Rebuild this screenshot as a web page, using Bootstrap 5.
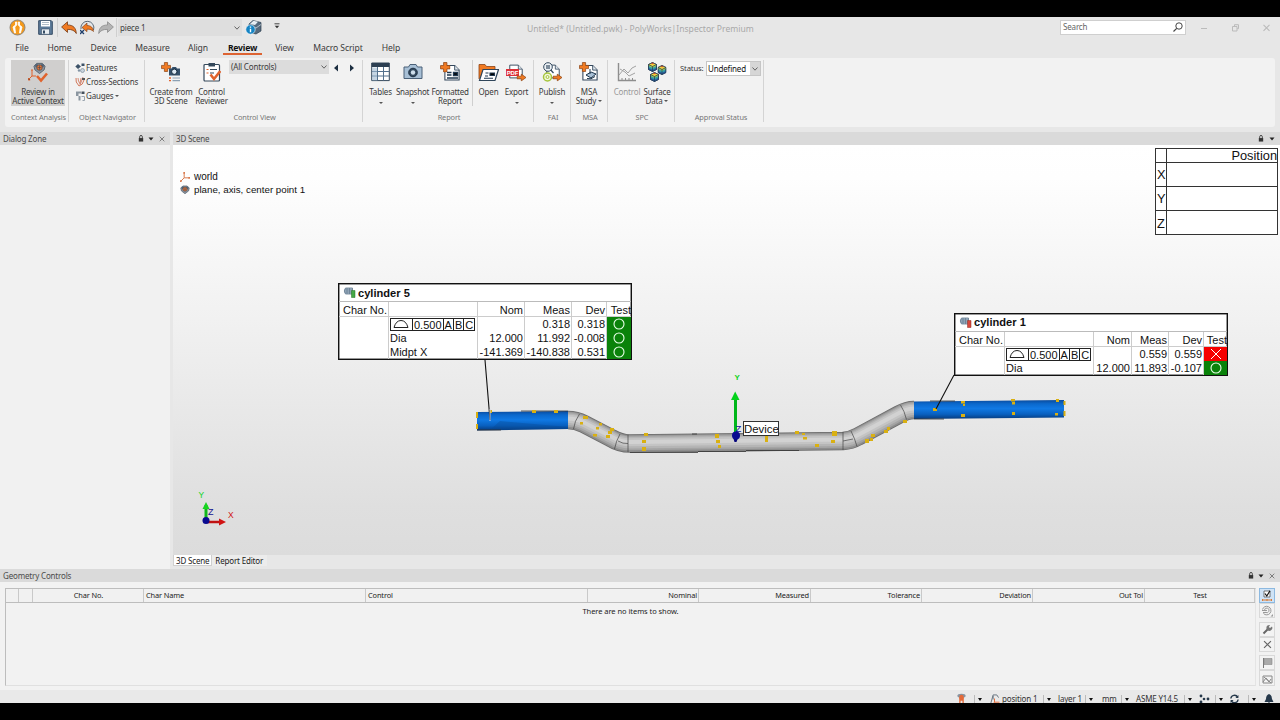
<!DOCTYPE html>
<html lang="en">
<head>
<meta charset="utf-8">
<meta name="viewport" content="width=device-width, initial-scale=1">
<title>Untitled* (Untitled.pwk) - PolyWorks|Inspector Premium</title>
<link href="https://cdn.jsdelivr.net/npm/bootstrap@5.3.0/dist/css/bootstrap.min.css" rel="stylesheet">
<style>
body{background:#000;padding:17px 0;height:720px;overflow:hidden;font:8px/10px "Noto Sans","Open Sans",sans-serif;letter-spacing:-.17px;color:#3b3b3b}
.app{height:686px;background:#e7e7e7}
svg{display:block;flex:none}
.titlebar{height:21px;padding-left:9px}
.vsep{width:1px;background:#cfcfcf}
.piece{width:124px;height:17px;background:#dedede;margin-left:3px;padding:0 2px}
.caption{left:527px;top:6px;font-size:8.57px;letter-spacing:0;color:#a9a9a9;line-height:13px}
.search{left:1060px;top:3px;width:126px;height:15px;background:#fff;border:1px solid #cfcfcf;padding:0 2px 2px;color:#666}
.menu{height:20px;font-size:8.6px;letter-spacing:-.1px}
.menu span{height:17px;padding-top:5px;text-align:center;white-space:nowrap;border-bottom:2px solid transparent}
.menu .on{font-weight:700;color:#111;border-color:#dd6332;letter-spacing:-.2px}
.ribbon{height:69px;margin:0 5px;background:#f2f2f2;border-radius:3px;padding-top:2px}
.grp{height:62px;border-right:1px solid #d4d4d4;position:relative}
.grp .glabel{position:absolute;left:2px;right:0;top:52px;text-align:center;font-size:7.4px;letter-spacing:-.13px;color:#777;line-height:10px;white-space:nowrap}
.rb{display:flex;flex-direction:column;align-items:center;text-align:center;line-height:9px;white-space:nowrap;padding-top:2px}
.rb svg{margin-bottom:5px}
.rb.on{background:#d0cfce}
.car{display:inline-block;width:0;height:0;border:2px solid transparent;border-top:2.5px solid #555;border-bottom:0;vertical-align:2px}
.cb{background:#dcdcdc;height:14px;padding:0 2px}
.row14{height:14px;display:flex;align-items:center;gap:1px;white-space:nowrap;position:relative;top:1px}
.dock{height:13px;background:#dadada;color:#4c4c4c;padding:0 4px 0 3px;line-height:13px}
.scene{height:410px;background:linear-gradient(#fff 0,#fefefe 8%,#f0f0f0 45%,#dfdfdf 88%,#dcdcdc);position:relative;overflow:hidden;font-family:"Liberation Sans",Arial,sans-serif;color:#111;letter-spacing:0}
.tree{left:7px;top:26px;font-size:10px;line-height:12.5px}
.pos{left:982px;top:3px;width:123px;height:87px;border:1px solid #333;background:#fff;font-size:12.8px;display:grid;grid-template:14px repeat(3,24px)/11px 1fr;gap:0}
.pos div{border-bottom:1px solid #333;display:flex;align-items:center;padding-top:1px}
.pos div:nth-child(odd){border-right:1px solid #333;padding-left:1px}
.pos div:nth-last-child(-n+2){border-bottom:0}
.callout{background:#fff;border:1px solid #111;box-shadow:inset 0 0 0 .5px #333;font-size:11px;line-height:14px}
.ctitle{font-weight:700;font-size:11.1px;border-bottom:1px solid #bbb;padding-left:4px;gap:2px;display:flex;align-items:center}
.cgrid{display:grid}
.cgrid>div{text-align:right;white-space:nowrap;border-right:1px solid #ccc;padding-right:1px;overflow:visible}
.cgrid>div.s{text-align:left;padding-left:1px}
.cgrid>div.h{border-bottom:1px solid #ccc;padding-top:1px}
.cgrid>div.t{border-right:0;padding-right:0}
.ok{background:#0a820a;display:flex;align-items:center;justify-content:center}
.ng{background:#f60000;display:flex;align-items:center;justify-content:center}
.fcf{display:inline-flex;border:1px solid #222;height:13px;line-height:12px;margin-top:1px;margin-left:1px}
.fcf b{font-weight:400;border-left:1px solid #222;padding:0 1px}
.devtag{left:570px;top:276px;width:36px;height:15px;background:#fff;border:1px solid #333;font-size:11.4px;line-height:15px;text-align:center}
.views{height:12px}
.views span{padding:0 4px 0 3px;height:11px;line-height:11px;background:#ececec;color:#222}
.views .on{background:#fff;border:1px solid #cfcfcf;border-top:0;padding:0 2px}
.geo{height:108px;background:#f2f2f2;padding:6px 4px 4px 5px}
.gtable{width:1251px;height:98px;border:1px solid #bdbdbd;border-right-color:#e4e4e4;border-bottom-color:#e0e0e0;background:#f2f2f2}
.ghead{height:14px;border-bottom:1px solid #bdbdbd;background:#f1f1f1;font-size:7.4px;letter-spacing:-.12px;line-height:13px;color:#222}
.ghead div{border-right:1px solid #c9c9c9;padding:0 1px 0 2px;white-space:nowrap}
.tb{width:16px;height:16px;border:1px solid #d9d9d9;background:#f3f3f3;display:flex;align-items:center;justify-content:center}
.tb.on{background:#cfe3f6;border-color:#8db9e0}
.status{height:13px;color:#333;background:#e9e9e9;padding-top:4px;overflow:hidden}
.dd{border-left:1px solid #bbb;width:8px;padding-left:3px;height:8px;line-height:6px}
.dd i{display:inline-block;border:2.5px solid transparent;border-top:3px solid #111;border-bottom:0}
</style>
</head>
<body>
<svg width="0" height="0" class="position-absolute">
<defs>
<symbol id="lock" viewBox="0 0 6 8"><path d="M1.5 4V2a1.5 1.5 0 0 1 3 0v2" fill="none" stroke="#333"/><path d="M.5 3.5h5v4h-5z" fill="#333"/></symbol>
<symbol id="dn" viewBox="0 0 6 4"><path d="M.5.5h5L3 3.5z" fill="#222"/></symbol>
<symbol id="ex" viewBox="0 0 6 6"><path d="M.7.7l4.6 4.6M5.3.7.7 5.3" stroke="#666" stroke-width=".8"/></symbol>
<symbol id="chev" viewBox="0 0 6 4"><path d="M.5.5 3 3.2 5.5.5" fill="none" stroke="#555" stroke-width=".9"/></symbol>
<symbol id="plus" viewBox="0 0 10 10"><path d="M3.4.5h3.2v2.9h2.9v3.2H6.6v2.9H3.4V6.6H.5V3.4h2.9z" fill="#f07a22" stroke="#8a4316" stroke-width=".7"/></symbol>
<symbol id="arr" viewBox="0 0 10 8"><path d="M.5 2.7h4.3V.6L9.5 4 4.8 7.4V5.3H.5z" fill="#f07a22" stroke="#8a4316" stroke-width=".7"/></symbol>
<symbol id="axes" viewBox="0 0 12 12"><path d="M5 1v6h6M5 7l-4 4" fill="none" stroke="#d97b4f" stroke-width="1.2"/><path d="M4 0h2v2H4zM10 6h2v2h-2zM0 10h2v2H0z" fill="#d97b4f"/></symbol>
<symbol id="dat" viewBox="0 0 14 12"><path d="M4 1h6l3 3-1 4-5 4-5-4-1-4z" fill="#8794a1" stroke="#444f5a" stroke-width=".8"/><circle cx="4" cy="3.5" r="1.8" fill="#506478"/><circle cx="10" cy="3.5" r="1.8" fill="#506478"/><circle cx="7" cy="5.5" r="3" fill="#e67537" stroke="#5a4a44" stroke-width=".8"/><path d="M7 3v5M4.8 5.5h4.4" stroke="#374655" stroke-width=".6"/></symbol>
<symbol id="cyl" viewBox="0 0 13 11"><path d="M2.5 1h7v6h-7Q0 4 2.5 1z" fill="#a9bccd" stroke="#63798e" stroke-width=".8"/><path d="M1.5 3h8M1.5 5h8M4 1v6M6.5 1v6" stroke="#63798e" stroke-width=".7"/></symbol>
<symbol id="cube" viewBox="0 0 9 10"><path d="M4.5.5 8.5 2.5v5l-4 2-4-2v-5z" fill="#34a0a4" stroke="#223a55" stroke-width=".7"/><path d="M4.5.5l4 2-4 2-4-2z" fill="#f2cf3a"/><path d="M3 1.3 4.5.5 6 1.3 4.5 2.3z" fill="#e04a2e"/><path d="M.5 5.8l4 2 4-2v1.7l-4 2-4-2z" fill="#285a9e"/><path d="M.5 2.5l4 2 4-2v1.2l-4 2-4-2z" fill="#b9d246"/><path d="M4.5 4.5v5M.5 2.5l4 2 4-2M4.5.5 8.5 2.5v5l-4 2-4-2v-5z" fill="none" stroke="#223a55" stroke-width=".7"/></symbol>
<symbol id="page" viewBox="0 0 18 18"><path d="M1 .8h11L17 6v11.2H1z" fill="#fff" stroke="#32475c" stroke-width="1.2"/><path d="M12 .8V6h5" fill="#dfe6ec" stroke="#32475c"/></symbol>
<symbol id="prof" viewBox="0 0 18 10"><path d="M2 8.5h14M2 8.5Q4 1.5 9 1.5t7 7" fill="none" stroke="#222" stroke-width="1"/></symbol>
<symbol id="ring" viewBox="0 0 12 12"><circle cx="6" cy="6" r="5" fill="none" stroke="#e9ffe9" stroke-width="1.1"/></symbol>
</defs>
</svg>

<div class="app">
<header class="titlebar d-flex align-items-center position-relative">
  <svg width="17" height="17" viewBox="0 0 17 17"><circle cx="8.5" cy="8.5" r="7.5" fill="#f49a1c" stroke="#8f8577"/><path d="M6.500 3h1.200v3L5.800 8l.7 6H5.500L4 8l2.500-2zM10.500 3H9.300v3l1.900 2-.7 6h1L13 8l-2.500-2z" fill="#fff" stroke="#fff" stroke-width=".8"/></svg>
  <svg style="margin-left:12px" width="15" height="15" viewBox="0 0 15 15"><path d="M.7.7h12.600l1 1v12.600H.7z" fill="#5d7b99" stroke="#354c64"/><path d="M3 1h9v5.500H3z" fill="#fff"/><path d="M4 2.500h7M4 4.500h7" stroke="#8fa0b0" stroke-width=".7"/><path d="M3.500 9h8v5.300h-8z" fill="#e9eef2" stroke="#354c64" stroke-width=".6"/><path d="M5 10.500h2v3H5z" fill="#354c64"/></svg>
  <div class="vsep ms-1" style="height:19px"></div>
  <svg style="margin-left:3px" width="16" height="14" viewBox="0 0 16 14"><path d="M.6 6 6.500.8V4c6 0 8.500 3 8.800 8.500C13.500 9.500 11 8.300 6.500 8.400v3z" fill="#f07a22" stroke="#743b18" stroke-width=".8"/></svg>
  <svg style="margin-left:3px" width="15" height="15" viewBox="0 0 15 15"><path d="M1 9a6.500 6.500 0 1 1 12.500 1" fill="#e3e6e9" stroke="#5b6b79"/><path d="M2 7.500 7 3v2.500c4 0 6 2 6.500 6C12 10 10 9 7 9.200v2.500z" fill="#f07a22" stroke="#743b18" stroke-width=".6"/><path d="M0 10l4 4M4 10l-4 4" stroke="#1f3f6c" stroke-width="1.300"/></svg>
  <svg style="margin-left:3px" width="16" height="14" viewBox="0 0 16 14"><path d="M15.400 6 9.500.8V4C3.500 4 1 7 .7 12.500 2.500 9.500 5 8.300 9.500 8.400v3z" fill="#b4b4b4" stroke="#8b8b8b" stroke-width=".8"/></svg>
  <div class="vsep" style="height:19px;margin-left:2px"></div>
  <div class="piece d-flex align-items-center justify-content-between" style="margin-left:1px"><span>piece 1</span><svg width="6" height="4"><use href="#chev"/></svg></div>
  <svg style="margin-left:3px" width="17" height="15" viewBox="0 0 17 15"><path d="M4 4l4-3.500 8 2V11l-5 3-7-2z" fill="#566a7d" stroke="#2e4052" stroke-width=".7"/><path d="M4 6l7 2 5-3.500" fill="none" stroke="#c5d0da" stroke-width=".8"/><path d="M5 4 8.500.8l4.500 1L10 5z" fill="#e6edf3"/><circle cx="5.500" cy="9.500" r="4.700" fill="#1584c4" stroke="#fff" stroke-width=".6"/><path d="M5.500 6.500v1.300M5.500 8.700v3.600" stroke="#fff" stroke-width="1.400"/></svg>
  <svg class="position-absolute" style="left:274px;top:6px" width="6" height="6" viewBox="0 0 6 6"><path d="M.5.800h5" stroke="#333" stroke-width=".9"/><path d="M.7 2.700h4.600L3 5.300z" fill="#333"/></svg>
  <span class="caption position-absolute">Untitled* (Untitled.pwk) - PolyWorks|Inspector Premium</span>
  <div class="search position-absolute d-flex align-items-center justify-content-between"><span>Search</span><svg width="10" height="10" viewBox="0 0 10 10"><circle cx="6" cy="4" r="3.200" fill="none" stroke="#444"/><path d="M3.700 6.300.5 9.500" stroke="#444" stroke-width="1.200"/></svg></div>
  <div class="position-absolute d-flex align-items-center" style="left:1201px;top:7px;gap:24px"><svg width="7" height="8" viewBox="0 0 7 8"><path d="M0 4.500h6" stroke="#bbb"/></svg><svg width="7" height="8" viewBox="0 0 7 8"><path d="M.5 2.500h4.500v4.500H.5zM2.500 2V.7H6.500v4H5.200" fill="none" stroke="#bbb"/></svg><svg width="7" height="8" viewBox="0 0 7 8"><path d="M.5.800l6 6M6.500.800l-6 6" stroke="#bbb" stroke-width="1.100"/></svg></div>
</header>
<nav class="menu d-flex">
  <span style="width:44px">File</span><span style="width:31px">Home</span><span style="width:57px">Device</span><span style="width:41px">Measure</span><span style="width:50px">Align</span><span class="on" style="width:39px">Review</span><span style="width:45px">View</span><span style="width:62px">Macro Script</span><span style="width:44px">Help</span>
</nav>
<section class="ribbon d-flex">
  <div class="grp d-flex" style="width:64px;padding-left:6px">
    <div class="rb on" style="width:54px;height:46px"><svg width="20" height="21" viewBox="0 0 20 21"><use href="#dat" x="5" y="0" width="13" height="12"/><path d="M4 8v6h4M4 14l-3.500 3.500" stroke="#e0632d" fill="none"/><path d="M3 8h2M.2 16v2h2" stroke="#e0632d"/><path d="M9 14l4 4.500L19 11.500" stroke="#e0632d" stroke-width="2.600" fill="none"/></svg><span style="margin-top:-1px">Review in<br>Active Context</span></div>
    <div class="glabel" style="left:4px">Context Analysis</div>
  </div>
  <div class="grp" style="width:76px;padding-left:6px">
    <div class="row14"><svg width="10" height="10" viewBox="0 0 10 10"><path d="M3 1l3 2.500L3 6 .3 3.500z" fill="#3c5268"/><path d="M6.500.5h3v2.500h-3z" fill="#3c5268"/><circle cx="7.500" cy="7.500" r="2" fill="#c8d3dc" stroke="#71818f" stroke-width=".6"/><circle cx="4" cy="7.500" r="1.200" fill="#8193a3"/></svg>Features</div>
    <div class="row14"><svg width="10" height="10" viewBox="0 0 10 10"><path d="M1 1q-1 4 3 8 4-1 5-6" fill="none" stroke="#d3785a"/><path d="M3 1q0 3 2 6M6 1l-1 5M8 0l-3 8" fill="none" stroke="#c96e55" stroke-width=".8"/><path d="M7 1h3v2H7z" fill="#555"/></svg>Cross-Sections</div>
    <div class="row14"><svg width="10" height="10" viewBox="0 0 10 10"><path d="M1 .5h5v2H3.500V5H1zM3.500 5h2v4.500h-2z" fill="#8b96a0"/><path d="M6.500.5h3v2.500h-3z" fill="#444f5a"/><path d="M6.500 5.500h3v4h-2" fill="none" stroke="#9aa5af"/></svg>Gauges <i class="car"></i></div>
    <div class="glabel">Object Navigator</div>
  </div>
  <div class="grp d-flex" style="width:218px;padding-left:3px">
    <div class="rb" style="width:46px"><svg width="20" height="20" viewBox="0 0 20 20"><use href="#plus" width="10" height="10"/><path d="M8 6.500h2.500l1-1.500h3.500l1 1.500H19v7H8z" fill="#34506b"/><circle cx="13.300" cy="9.700" r="2.700" fill="#dce8f2" stroke="#10263a"/><path d="M8 16h2M8 18.700h2" stroke="#e0632d" stroke-width="1.300"/><path d="M11.500 16H19M11.500 18.700H19" stroke="#8ba0b3" stroke-width="1.200"/></svg><span>Create from<br>3D Scene</span></div>
    <div class="rb" style="width:35px"><svg width="18" height="20" viewBox="0 0 18 20"><rect x="1" y="2.500" width="15.500" height="16.500" rx="1" fill="#fff" stroke="#34485b" stroke-width="1.200"/><path d="M5.500 1h6.500v3.500H5.500z" fill="#34485b"/><path d="M3.500 7.500h2M3.500 11h2" stroke="#e0632d" stroke-width="1.200"/><path d="M7 7.500h7M7 11h4" stroke="#34485b" stroke-width="1.200"/><path d="M7.500 12.500l3.500 4.500L17.300 9" stroke="#e0632d" stroke-width="2.600" fill="none"/></svg><span>Control<br>Reviewer</span></div>
    <div class="cb d-flex align-items-center justify-content-between" style="width:100px"><span>(All Controls)</span><svg width="6" height="4"><use href="#chev"/></svg></div>
    <svg style="margin:4px 0 0 4px" width="21" height="8" viewBox="0 0 21 8"><path d="M5 .5v7L1 4zM17 .5v7l4-3.500z" fill="#1d2f42"/></svg>
    <div class="glabel">Control View</div>
  </div>
  <div class="grp d-flex" style="width:171px">
    <div class="rb" style="width:35px"><svg width="19" height="20" viewBox="0 0 19 20"><path d="M.7 1h17.600v17.600H.7z" fill="#fff" stroke="#34485b"/><path d="M.7 1h17.600v4H.7z" fill="#2c3f52"/><path d="M1 9.500h17M1 14h17M6.500 5v13.500M12.500 5v13.500" stroke="#54718d"/><path d="M1.300 5.500h4.700v13H1.300z" fill="#9fb9d1" opacity=".6"/></svg><span>Tables</span><i class="car" style="margin-top:6px"></i></div>
    <div class="rb" style="width:29px"><svg width="20" height="20" viewBox="0 0 20 20"><path d="M1 5h4.500l1.500-2.500h6L14.500 5H19v11.500H1z" fill="#a8c0d6" stroke="#4b6178"/><circle cx="10" cy="10.500" r="4.300" fill="#33495e" stroke="#1d2f42"/><circle cx="10" cy="10.500" r="2.200" fill="#cfdfec"/></svg><span style="letter-spacing:-.25px">Snapshot</span><i class="car" style="margin-top:6px"></i></div>
    <div class="rb" style="width:45px;padding-left:1px"><svg width="20" height="20" viewBox="0 0 20 20"><use href="#page" x="4" y="2" width="16" height="17.500"/><path d="M7 10.500h4.500M7 13h4.500M7 16h11M13.500 10.500h4v3h-4z" stroke="#20384f" stroke-width="1.300"/><use href="#plus" width="10.500" height="10.500"/></svg><span style="letter-spacing:-.25px">Formatted<br>Report</span></div>
    <div class="vsep" style="height:46px"></div>
    <div class="rb" style="width:31px"><svg width="21" height="20" viewBox="0 0 21 20"><path d="M1 17V2.500h6l1.500 2H17v4" fill="#f07a22" stroke="#8a4316" stroke-width=".8"/><path d="M1.500 18.500 5 7.500h15.500L17 18.500z" fill="#fff" stroke="#2f455a" stroke-width="1.200"/><path d="M7.500 11h3M7 14h3M6 16.300h9M12 11h4.500v2.500H12z" stroke="#20384f" stroke-width="1.100"/></svg><span>Open</span></div>
    <div class="rb" style="width:25px"><svg width="21" height="20" viewBox="0 0 21 20"><use href="#page" x="3" y="1" width="14" height="17"/><path d="M0 7h13v7H0z" fill="#dc3038"/><text x=".7" y="12.700" font-size="6" font-weight="700" fill="#fff" font-family="Liberation Sans" textLength="11.500">PDF</text><use href="#arr" x="10.500" y="11.500" width="10" height="8"/></svg><span>Export</span><i class="car" style="margin-top:6px"></i></div>
    <div class="glabel">Report</div>
  </div>
  <div class="grp" style="width:37px">
    <div class="rb"><svg width="21" height="20" viewBox="0 0 21 20"><use href="#page" x="4" y="1" width="14" height="17"/><circle cx="6" cy="5" r="4.300" fill="#eef3f7" stroke="#33495e"/><path d="M5 3v4M7 3v4M8.800 8l2.700 3" stroke="#33495e" stroke-width="1.200"/><circle cx="5.500" cy="15" r="4" fill="#f3f8df" stroke="#a6c53c" stroke-width="1.500"/><circle cx="5.500" cy="15" r="1.500" fill="none" stroke="#a6c53c"/><use href="#arr" x="10.500" y="11.500" width="10" height="8"/></svg><span>Publish</span><i class="car" style="margin-top:6px"></i></div>
    <div class="glabel">FAI</div>
  </div>
  <div class="grp" style="width:37px">
    <div class="rb"><svg width="20" height="20" viewBox="0 0 20 20"><use href="#page" x="3" y="2" width="16" height="17.500"/><path d="M7 13l5-3 5 2-5 4z" fill="#a8c0d6" stroke="#20384f"/><path d="M8 16.500q4 1.500 8-2M11 7v5" stroke="#20384f" fill="none"/><use href="#plus" width="10" height="10"/></svg><span>MSA<br>Study <i class="car"></i></span></div>
    <div class="glabel">MSA</div>
  </div>
  <div class="grp d-flex" style="width:67px;padding-left:4px">
    <div class="rb" style="width:30px;color:#999"><svg width="20" height="20" viewBox="0 0 20 20"><path d="M1.500 1v17.500H19" fill="none" stroke="#8e8e8e" stroke-width="1.400"/><path d="M2 13l5-6 4 4 4-5 4-2M3 7l5 3 4 4 6-3" fill="none" stroke="#a2a2a2"/><path d="M5 16v2M8.500 16v2M12 16v2M15.500 16v2" stroke="#8e8e8e"/></svg><span>Control</span></div>
    <div class="rb" style="width:30px"><svg width="20" height="20" viewBox="0 0 20 20"><use href="#cube" x="1" y="0" width="9" height="10"/><use href="#cube" x="10.500" y="3" width="9" height="10"/><use href="#cube" x="3" y="10" width="9" height="10"/></svg><span>Surface<br>Data <i class="car"></i></span></div>
    <div class="glabel">SPC</div>
  </div>
  <div class="grp d-flex" style="width:89px;padding-left:5px">
    <span style="margin-top:3px;width:26px;font-size:7.700px">Status:</span>
    <div class="d-flex bg-white" style="width:55px;height:15px;border:1px solid #c6c6c6;margin-top:1px;color:#111;line-height:13px"><span class="flex-fill" style="padding-left:1px">Undefined</span><span style="width:10px;background:#d6d6d6;padding:5px 2px"><svg width="6" height="4"><use href="#chev"/></svg></span></div>
    <div class="glabel" style="left:4px">Approval Status</div>
  </div>
</section>
<div style="height:5px"></div>

<div class="d-flex" style="height:437px">
  <aside style="width:170px;background:#f1f1f1">
    <div class="dock d-flex align-items-center"><span class="flex-fill">Dialog Zone</span><svg width="6" height="7" style="margin-right:4px"><use href="#lock"/></svg><svg width="6" height="4" style="margin-right:5px"><use href="#dn"/></svg><svg width="6" height="6" style="margin-right:1px"><use href="#ex"/></svg></div>
  </aside>
  <main style="width:1107px;margin-left:3px">
    <div class="dock d-flex align-items-center"><span class="flex-fill">3D Scene</span><svg width="6" height="7" style="margin-right:5px"><use href="#lock"/></svg><svg width="6" height="4" style="margin-right:1px"><use href="#dn"/></svg></div>
    <div class="scene">
      <!-- part geometry; coordinates are window pixels -->
      <svg class="position-absolute top-0 start-0" width="1107" height="410" viewBox="173 145 1107 410">
        <defs>
          <linearGradient id="gb" x2="0" y2="1"><stop offset="0" stop-color="#0a4a9c"/><stop offset=".2" stop-color="#0b68cc"/><stop offset=".45" stop-color="#1079e4"/><stop offset=".75" stop-color="#0960bf"/><stop offset="1" stop-color="#063a7c"/></linearGradient>
          <path id="cl" d="M568 420Q576 420 584 424L611 438Q620 443.500 630 443.500L843 441Q851 440.500 858 436.500L899 414.500Q907 410 914 410"/>
        </defs>
        <g fill="none">
          <use href="#cl" stroke="#6b6b6b" stroke-width="18.500"/><use href="#cl" stroke="#8d8d8d" stroke-width="17"/><use href="#cl" stroke="#a4a4a4" stroke-width="14.500" y="-.4"/><use href="#cl" stroke="#b5b5b5" stroke-width="11.500" y="-.8"/><use href="#cl" stroke="#c4c4c4" stroke-width="8" y="-1.200"/><use href="#cl" stroke="#d2d2d2" stroke-width="4" y="-1.500"/>
        </g>
        <path d="M477 412l91-1v18l-91 1.500z" fill="url(#gb)"/>
        <path d="M500 421l68 6v2l-78 1z" fill="#08488f" opacity=".35"/>
        <path d="M914 401.500 1064 400v17.500l-150 1.500z" fill="url(#gb)"/>
        <path d="M579.500 414q-5 7-6 15M620 434q-4 7-5.500 15M628 435v17M618 441q5 3 10 2.500M843 432v18M851 431q4 8 6 15.500M843 441l10-2M900.500 405q4 6 6 14.500" fill="none" stroke="#444" stroke-width=".7"/>
        <path d="M521 411h47M477 430h24M630 452.500h68M698 451.500h48M746 450.500h53M692 434h5M930 401h25M914 419h30" stroke="#333" stroke-width=".8"/>
        <path fill="#d9b012" d="M476 412h2v6h-2zM476 424h2v5h-2zM489 410h3v3h-3zM532 410h4v3h-4zM554 410h4v3h-4zM583 416h5v3h-5zM580 422h3v2.500h-3zM599 423h3v2.500h-3zM596 427h3v2.500h-3zM610 428h4v3h-4zM608 431h4v3h-4zM606 435h4v3h-4zM593 434h4v2.500h-4zM644 433h4v3h-4zM642 440h4v3h-4zM642 447h4v4h-4zM715 434h4v4h-4zM716 440h4v3h-4zM718 445h3v3h-3zM765 436h3v6h-3zM795 431h4v3h-4zM803 437h4v2.500h-4zM802 433h3v2h-3zM815 444h4v3h-4zM832 431h5v5h-5zM831 440h4v3h-4zM865 439h4v4h-4zM871 434h4v3h-4zM870 438h3v3h-3zM884 430h4v3h-4zM887 427h3v3h-3zM903 420h4v3h-4zM961 401h4v2.500h-4zM963 404h2v2h-2zM961 414h4v3h-4zM1011 399h4v2.500h-4zM1012 402h3v2.500h-3zM1012 412h3v3h-3zM1056 399h3v3h-3zM1055 413h3v2.500h-3zM1063.500 401h2v4h-2zM1063.500 411h2v5h-2zM933 408h4v3h-4z"/>
        <path d="M485 360l5 60M954 375l-18 34" stroke="#111" stroke-width="1.100"/>
        <path d="M490 409v12" stroke="#d8d8e8" stroke-width=".9"/>
        <path d="M735.500 399v37" stroke="#00b61a" stroke-width="3"/><path d="M731 400l4.200-8.500L739.500 400z" fill="#04d21c"/>
        <path d="M736 432a3.500 4 0 0 1 2 6l-1.500 4h-2L733 437z" fill="#06067c"/><circle cx="736" cy="435.500" r="4" fill="#0a0a90"/>
        <path d="M206 505v16" stroke="#12b81c" stroke-width="3"/><path d="M202.500 509l3.500-7 3.500 7z" fill="#17d321"/>
        <path d="M207 522h13" stroke="#c01212" stroke-width="2.500"/><path d="M219 518.500l7 3.500-7 3.500z" fill="#d11414"/><circle cx="206" cy="520.500" r="3.500" fill="#0a0a90"/>
        <g font-family="Liberation Sans" font-size="9"><text x="734.500" y="380" fill="#12d422" font-weight="700" font-size="8">Y</text><text x="735.500" y="432" fill="#11118f" font-size="9.500">Z</text><text x="198.500" y="498" fill="#12d422" font-size="8.500">Y</text><text x="208" y="515" fill="#11118f">Z</text><text x="228" y="518" fill="#d11414" font-size="8.500">X</text></g>
      </svg>
      <div class="tree position-absolute"><div class="d-flex align-items-center" style="gap:4px"><svg width="10" height="10"><use href="#axes"/></svg>world</div><div class="d-flex align-items-center" style="gap:4px;font-size:9.750px"><svg width="10" height="9"><use href="#dat"/></svg>plane, axis, center point 1</div></div>
      <div class="pos position-absolute"><div></div><div class="justify-content-end">Position</div><div>X</div><div></div><div>Y</div><div></div><div>Z</div><div></div></div>

      <div class="callout position-absolute" style="left:165px;top:138px;width:294px;height:77px">
        <div class="ctitle" style="height:18px"><svg width="13" height="11"><use href="#cyl"/><path d="M8.500 3.500h3.500v7H8.500z" fill="#45a845" stroke="#227022" stroke-width=".5"/></svg>cylinder 5</div>
        <div class="cgrid" style="grid-template:15px 14px 14px 14px/50px 89px 47px 47px 35px 1fr">
          <div class="h">Char No.</div><div class="h"></div><div class="h">Nom</div><div class="h">Meas</div><div class="h">Dev</div><div class="h t">Test</div>
          <div></div><div class="s" style="padding-left:0"><span class="fcf"><svg width="21" height="11"><use href="#prof" x="1" width="18" height="10"/></svg><b>0.500</b><b>A</b><b>B</b><b>C</b></span></div><div></div><div>0.318</div><div>0.318</div><div class="t ok"><svg width="12" height="12"><use href="#ring"/></svg></div>
          <div></div><div class="s">Dia</div><div>12.000</div><div>11.992</div><div>-0.008</div><div class="t ok"><svg width="12" height="12"><use href="#ring"/></svg></div>
          <div></div><div class="s">Midpt X</div><div>-141.369</div><div>-140.838</div><div>0.531</div><div class="t ok"><svg width="12" height="12"><use href="#ring"/></svg></div>
        </div>
      </div>
      <div class="callout position-absolute" style="left:781px;top:167.500px;width:274px;height:63px">
        <div class="ctitle" style="height:18px"><svg width="13" height="11"><use href="#cyl"/><path d="M8.500 3.500h3.500v7H8.500z" fill="#d8483c" stroke="#8e2a22" stroke-width=".5"/></svg>cylinder 1</div>
        <div class="cgrid" style="grid-template:15px 14px 14px/50px 89px 38px 37px 35px 1fr">
          <div class="h">Char No.</div><div class="h"></div><div class="h">Nom</div><div class="h">Meas</div><div class="h">Dev</div><div class="h t">Test</div>
          <div></div><div class="s" style="padding-left:0"><span class="fcf"><svg width="21" height="11"><use href="#prof" x="1" width="18" height="10"/></svg><b>0.500</b><b>A</b><b>B</b><b>C</b></span></div><div></div><div>0.559</div><div>0.559</div><div class="t ng"><svg width="12" height="12" viewBox="0 0 12 12"><path d="M1 1l10 10M11 1 1 11" stroke="#fff"/></svg></div>
          <div></div><div class="s">Dia</div><div>12.000</div><div>11.893</div><div>-0.107</div><div class="t ok"><svg width="12" height="12"><use href="#ring"/></svg></div>
        </div>
      </div>
      <div class="devtag position-absolute">Device</div>
    </div>
    <div class="views d-flex"><span class="on">3D Scene</span><span>Report Editor</span></div>
  </main>
</div>

<div class="dock d-flex align-items-center"><span class="flex-fill">Geometry Controls</span><svg width="6" height="7" style="margin-right:4px"><use href="#lock"/></svg><svg width="6" height="4" style="margin-right:5px"><use href="#dn"/></svg><svg width="6" height="6" style="margin-right:1px"><use href="#ex"/></svg></div>
<section class="geo d-flex justify-content-between">
  <div class="gtable">
    <div class="ghead d-flex"><div style="width:13px"></div><div style="width:14px"></div><div class="text-center" style="width:111px">Char No.</div><div style="width:222px">Char Name</div><div style="width:222px">Control</div><div class="text-end" style="width:111px">Nominal</div><div class="text-end" style="width:112px">Measured</div><div class="text-end" style="width:111px">Tolerance</div><div class="text-end" style="width:111px">Deviation</div><div class="text-end" style="width:112px">Out Tol</div><div class="text-center flex-fill">Test</div></div>
    <div class="text-center" style="font-size:7.500px;letter-spacing:-.05px;padding-top:3px;color:#222">There are no items to show.</div>
  </div>
  <div class="d-flex flex-column overflow-hidden" style="height:98px;margin-right:1px">
    <div class="tb on"><svg width="12" height="12" viewBox="0 0 12 12"><path d="M3 1h6v6H3z" fill="#fff" stroke="#444" stroke-width=".7"/><path d="M4 3.500 5.800 6 9 .8" stroke="#111" fill="none" stroke-width="1.200"/><path d="M1 10h10M1.500 9v2M10.500 9v2M6 9v2" stroke="#d97a35"/></svg></div>
    <div class="tb"><svg width="12" height="12" viewBox="0 0 12 12"><path d="M1.500 4.500a4.300 4.300 0 1 1 1 4M3.500 5a2.300 2.300 0 1 1 1 2.300M1 5.500h5M2 7.500h3" fill="none" stroke="#999"/><path d="M9.500 11.500H12V9z" fill="#999"/></svg></div>
    <div class="tb" style="margin-top:4px"><svg width="11" height="11" viewBox="0 0 11 11"><path d="M1.500 9.500 6.500 4.500" stroke="#666" stroke-width="2"/><path d="M10 2.500 8 4 6.800 3 8 1A3 3 0 1 0 10 2.500" fill="#777"/></svg></div>
    <div class="tb"><svg width="9" height="9"><use href="#ex" width="9" height="9"/></svg></div>
    <div class="tb" style="margin-top:3px"><svg width="11" height="11" viewBox="0 0 11 11"><path d="M1.500 1v10" stroke="#777"/><path d="M2 1.500h8v6H2z" fill="#aaa" stroke="#888" stroke-width=".6"/></svg></div>
    <div class="tb flex-shrink-0"><svg width="11" height="11" viewBox="0 0 11 11"><path d="M1 3h9v7H1zM1 9l3-4 3 4 2-3M2 4l7 6" fill="none" stroke="#888"/></svg></div>
  </div>
</section>
<footer class="status d-flex align-items-center" style="padding-left:956px">
  <svg width="11" height="11" viewBox="0 0 11 12"><ellipse cx="5.500" cy="3" rx="4.500" ry="2.300" fill="#8794a1"/><path d="M3 5.500h5v6H6.500v-3h-2v3H3z" fill="#e36a3a"/><circle cx="5.500" cy="4.500" r="2.500" fill="#e36a3a"/></svg>
  <div class="dd" style="margin-left:7px"><i></i></div>
  <svg style="margin-left:7px" width="11" height="10" viewBox="0 0 11 11"><path d="M1.500 10 4 1h4l2 3M4 2v4" fill="none" stroke="#5f6d7a"/><path d="M5.500 5v4H11M5.500 9 3.500 11" stroke="#e0632d" fill="none"/></svg>
  <span style="width:42px;padding-left:2px">position 1</span><div class="dd" style="margin-left:1px"><i></i></div>
  <span style="margin-left:7px;width:27px">layer 1</span><div class="dd"><i></i></div>
  <span style="margin-left:9px;width:19px">mm</span><div class="dd"><i></i></div>
  <span style="margin-left:7px;width:46px">ASME Y14.5</span><div class="dd" style="margin-left:2px"><i></i></div>
  <svg style="margin-left:7px" width="11" height="10" viewBox="0 0 11 10"><circle cx="2" cy="2" r="1.400" fill="#26384a"/><circle cx="2" cy="8" r="1.400" fill="#26384a"/><circle cx="5" cy="5" r="1.300" fill="#26384a"/><circle cx="9" cy="5" r="1.400" fill="#26384a"/></svg>
  <div class="dd" style="margin-left:5px"><i></i></div>
  <svg style="margin-left:6px" width="11" height="10" viewBox="0 0 11 11"><path d="M1.500 5A4 4 0 0 1 9 3.500M9.500 6A4 4 0 0 1 2 7.500" fill="none" stroke="#26384a" stroke-width="1.500"/><path d="M9.800 1v3.500H6.500zM1.200 10V6.500h3.300z" fill="#26384a"/></svg>
  <div class="dd" style="margin-left:8px"><i></i></div>
  <svg style="margin-left:8px" width="10" height="10" viewBox="0 0 10 10"><path d="M5 0Q8 1 8 5l1.500 3h-9L2 5Q2 1 5 0zM4 8.500h2v1H4z" fill="#26384a"/></svg>
</footer>
</div>
<script src="https://cdn.jsdelivr.net/npm/bootstrap@5.3.0/dist/js/bootstrap.bundle.min.js"></script>
</body>
</html>
